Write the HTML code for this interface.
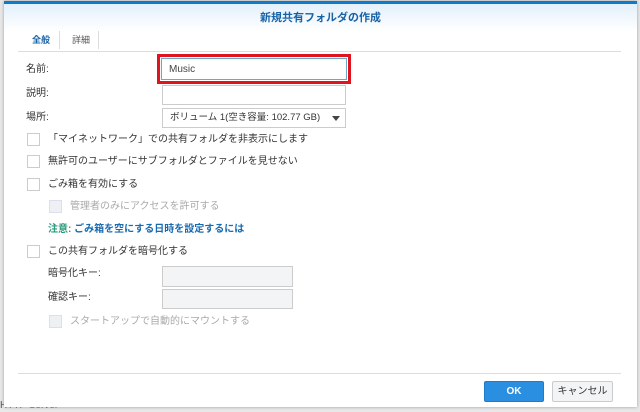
<!DOCTYPE html>
<html><head><meta charset="utf-8"><style>
*{box-sizing:border-box;margin:0;padding:0}
body{width:640px;height:410px;background:#e8e8e8;font-family:"Liberation Sans","Noto Sans CJK JP",sans-serif;font-size:10px;color:#333;position:relative;overflow:hidden}
.dlg{position:absolute;left:4px;top:1px;width:633px;height:406px;background:#fff;border-top:3px solid #0f7ac9;box-shadow:0 0 3px #999}
.hdr{position:absolute;left:0;top:0;width:100%;height:28px;background:linear-gradient(#e3f0fc,#fff)}
.a{position:absolute;white-space:nowrap;line-height:12px}
.cb{position:absolute;width:13px;height:13px;border:1px solid #ccc;background:#fff}
.cb.d{background:#eef1f4;border-color:#dde}
.in{position:absolute;border:1px solid #ccc;background:#fff}
.in.d{background:#f3f4f5}
.gray{color:#aaa}
</style></head><body>
<div class="a" style="left:0;top:400px;font-size:10px;color:#555">HTTP Server</div>
<div class="dlg">
<div class="hdr"></div>
<div class="a" style="left:0;width:633px;text-align:center;top:8px;color:#1763a8;font-weight:bold;font-size:11px">新規共有フォルダの作成</div>
<div class="a" style="left:28px;top:30px;color:#1763a8;font-weight:bold;font-size:9px">全般</div>
<div class="a" style="left:55px;top:27px;width:1px;height:18px;background:#ddd"></div>
<div class="a" style="left:68px;top:30px;color:#555;font-size:9px">詳細</div>
<div class="a" style="left:94px;top:27px;width:1px;height:18px;background:#ddd"></div>
<div class="a" style="left:14px;top:47px;width:603px;height:1px;background:#ddd"></div>
<div class="a" style="left:22px;top:60px">名前:</div>
<div class="a" style="left:153px;top:50px;width:194px;height:30px;border:3px solid #e0141e"></div>
<div class="in" style="left:157px;top:54px;width:186px;height:22px;border-color:#6aa9c8"></div>
<div class="a" style="left:165px;top:60px;color:#444">Music</div>
<div class="a" style="left:22px;top:84px">説明:</div>
<div class="in" style="left:158px;top:81px;width:184px;height:20px"></div>
<div class="a" style="left:22px;top:108px">場所:</div>
<div class="in" style="left:158px;top:104px;width:184px;height:20px"></div>
<div class="a" style="left:166px;top:108px;font-size:9.5px">ボリューム 1(空き容量: 102.77 GB)</div>
<div class="a" style="left:328px;top:112px;border:4px solid transparent;border-top:5px solid #444;line-height:0"></div>
<div class="cb" style="left:23px;top:129px"></div><div class="a" style="left:44px;top:130px">「マイネットワーク」での共有フォルダを非表示にします</div>
<div class="cb" style="left:23px;top:151px"></div><div class="a" style="left:44px;top:152px">無許可のユーザーにサブフォルダとファイルを見せない</div>
<div class="cb" style="left:23px;top:174px"></div><div class="a" style="left:44px;top:175px">ごみ箱を有効にする</div>
<div class="cb d" style="left:45px;top:196px"></div><div class="a gray" style="left:66px;top:197px">管理者のみにアクセスを許可する</div>
<div class="a" style="left:44px;top:220px;font-weight:bold"><span style="color:#2a9a7a">注意: </span><span style="color:#1a6ab0">ごみ箱を空にする日時を設定するには</span></div>
<div class="cb" style="left:23px;top:241px"></div><div class="a" style="left:44px;top:242px">この共有フォルダを暗号化する</div>
<div class="a" style="left:44px;top:264px">暗号化キー:</div>
<div class="in d" style="left:158px;top:262px;width:131px;height:21px"></div>
<div class="a" style="left:44px;top:288px">確認キー:</div>
<div class="in d" style="left:158px;top:285px;width:131px;height:20px"></div>
<div class="cb d" style="left:45px;top:311px"></div><div class="a gray" style="left:66px;top:312px">スタートアップで自動的にマウントする</div>
<div class="a" style="left:14px;top:369px;width:603px;height:1px;background:#ddd"></div>
<div class="a" style="left:480px;top:377px;width:60px;height:21px;background:#2a8fe0;border:1px solid #1f7cc8;border-radius:2px;color:#fff;text-align:center;line-height:19px;font-weight:bold">OK</div>
<div class="a" style="left:548px;top:377px;width:61px;height:21px;background:#f3f4f6;border:1px solid #ccc;border-radius:2px;text-align:center;line-height:19px;color:#333">キャンセル</div>
</div>
</body></html>
